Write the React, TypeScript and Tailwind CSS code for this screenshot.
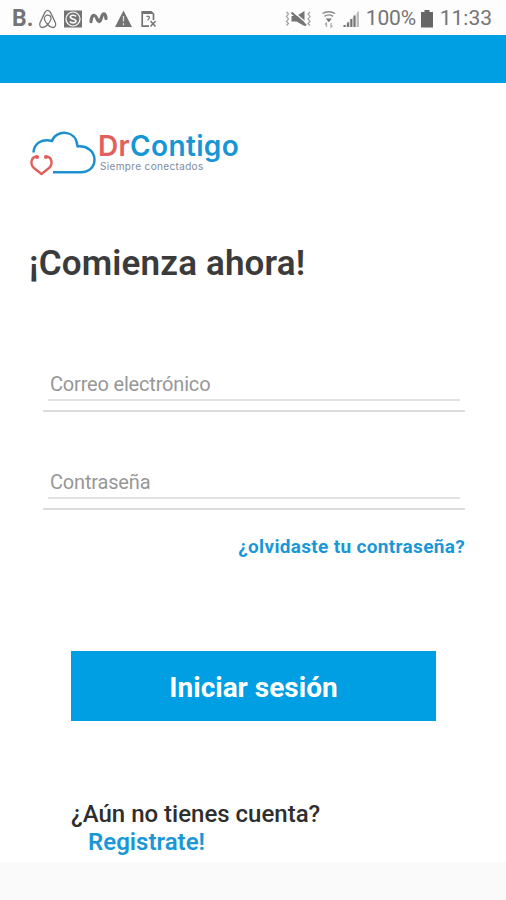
import React, { useState } from "react";

interface FieldProps {
  id: string;
  type: string;
  label: string;
  value: string;
  onChange: (value: string) => void;
}

function Field({ id, type, label, value, onChange }: FieldProps) {
  return (
    <div className="h-[47px] border-b-2 border-[#dcdcdc] px-[5px]">
      <input
        id={id}
        type={type}
        value={value}
        placeholder={label}
        aria-label={label}
        onChange={(e) => onChange(e.target.value)}
        className="block h-[36px] w-full border-b-2 border-[#e2e2e2] px-[2px] pt-[3px] text-[20px] tracking-[-0.18px] text-[#444] placeholder:text-[#979797] placeholder:opacity-100 focus:outline-none"
      />
    </div>
  );
}

function StatusBar() {
  return (
    <div className="flex h-[35px] items-center justify-between bg-[#fdfdfd] pl-[12px] pr-[14px] pt-[2px] text-[#747474]">
      {/* Notifications */}
      <div className="flex items-center">
        <span className="w-[26px] text-[23px] font-bold leading-none">B.</span>
        <svg width="120" height="20" viewBox="38 8 120 20" fill="none" stroke="currentColor">
          {/* Airbnb */}
          <path
            d="M47.700 9.300c-1.500 0-2.200 1-3 2.600l-4.500 9.300c-1.500 3 .2 5.300 2.500 5.300 2 0 3.800-1.500 5-3 1.200 1.500 3 3 5 3 2.300 0 4-2.300 2.500-5.300l-4.500-9.300c-.8-1.600-1.500-2.600-3-2.600z"
            strokeWidth="1.300"
          />
          <path
            d="M47.700 23.500c-2-2.300-3.300-4.300-3.300-6 0-2 1.400-3.300 3.300-3.300s3.300 1.300 3.300 3.300c0 1.700-1.300 3.700-3.300 6z"
            strokeWidth="1.200"
          />
          {/* Square S */}
          <rect x="64" y="9.500" width="18" height="17" fill="currentColor" stroke="none" />
          <circle cx="73" cy="18" r="7" stroke="#fdfdfd" strokeWidth="1.200" />
          <path d="M76 15.500c-1-1.700-5.500-1.800-5.700.5-.2 2.300 5.600 1.500 5.600 4 0 2.400-4.700 2.300-6 .5" stroke="#fdfdfd" strokeWidth="1.600" />
          {/* Movistar */}
          <path d="M91 20.500c.3-4 1.500-6.500 3.500-6 2.500.5 2.500 6 4.800 6 2 0 2-7.500 4.500-7.500 1.700 0 2 2.500 2.200 4.500" strokeWidth="3.300" strokeLinecap="round" />
          {/* Warning */}
          <path d="M123.500 9.500l8.500 16.500h-17z" fill="currentColor" stroke="none" />
          <path d="M123.500 15v5.500M123.500 22.300v2" stroke="#fdfdfd" strokeWidth="1.300" opacity=".8" />
          {/* Document */}
          <path d="M149 25.200h-6.800V10.800h9l2.300 2.200v6" strokeWidth="1.700" />
          <path d="M143 12h9.500" strokeWidth="2" />
          <path d="M146.800 16c.5-1.200 2.700-1 2.700.4 0 1.200-1.600 1.400-1.600 3" strokeWidth="1.200" />
          <path d="M150.500 20l5 5.500M155.500 20l-5 5.500" strokeWidth="1.500" />
        </svg>
      </div>

      {/* System */}
      <div className="flex items-center">
        <svg width="80" height="20" viewBox="284 8 80 20" fill="none" stroke="currentColor">
          {/* Vibrate, muted */}
          <path d="M285.500 11l2 2-2 2.500 2 2.500-2 2.500 2 2-2 2M309 11l-2 2 2 2.500-2 2.500 2 2.500-2 2 2 2" strokeWidth="1.200" opacity=".7" />
          <path d="M290.500 15h5l8-5v15l-8-4.500h-5z" fill="currentColor" stroke="none" />
          <path d="M291 9.500l14.500 12.500" stroke="#fdfdfd" strokeWidth="1.500" />
          <path d="M290.500 11.500l14.500 13" strokeWidth="2.200" />
          {/* Wifi */}
          <path d="M321.500 12.500c3.500-2.500 9-2.500 12.500 0M323.500 15.300c2.300-1.800 6-1.800 8.500 0" strokeWidth="1.500" opacity=".85" />
          <path d="M324.800 17.500h6l-3 3.800z" fill="currentColor" stroke="none" />
          <path d="M325.500 26v-4l-1.500 1.500M330 22v4l1.500-1.500" strokeWidth="1.200" opacity=".6" />
          {/* Signal */}
          <path d="M342 26l16-16v16z" fill="currentColor" stroke="none" opacity=".22" />
          <path d="M343.500 24v2M347 21.500V26M350.300 18v8M353.500 14.500V26" strokeWidth="2" />
          <path d="M357 10.500V26" strokeWidth="2" opacity=".3" />
        </svg>
        <span className="ml-[1px] w-[55px] text-[21px] leading-none tracking-[-0.1px]">100%</span>
        <svg width="12" height="18" viewBox="0 0 12 18" fill="#666">
          <path d="M3.500 0h5v2H12v15.500H0V2h3.500z" />
        </svg>
        <span className="ml-[7px] text-[21px] leading-none">11:33</span>
      </div>
    </div>
  );
}

function Logo() {
  return (
    <div className="flex h-[46px] items-start">
      <svg width="68" height="46" viewBox="29 130 68 46" fill="none">
        <path
          d="M33.500 152.500c.5-9 8.500-14.500 18.500-11.500 3.500-11 24-12.500 25.500 5.500 9-1 17 4.500 17 13 0 8-6 12.700-13.500 12.700H53"
          stroke="#1e90cd"
          strokeWidth="2.500"
          strokeLinejoin="round"
        />
        <path
          d="M37 156.500c-6.500.5-7 8-3 11.500l7.500 6 7.500-6c4-3.500 3.500-11-3-11.500"
          stroke="#e2605c"
          strokeWidth="2.400"
          strokeLinejoin="round"
        />
        <circle cx="37" cy="157" r="2.100" fill="#e2605c" />
        <circle cx="46" cy="157" r="2.100" fill="#e2605c" />
      </svg>
      <div className="pl-[1px]">
        <p className="whitespace-nowrap pt-px font-['Inter'] text-[28px] font-semibold leading-[31px] tracking-[0.350px] text-[#1796d6]">
          <span className="text-[#e2605c]">Dr</span>Contigo
        </p>
        <p className="-mt-px whitespace-nowrap pl-[2px] font-['Inter'] text-[10px] leading-[10px] tracking-[0.350px] text-[#7d8ba0]">
          Siempre conectados
        </p>
      </div>
    </div>
  );
}

export default function App() {
  const [email, setEmail] = useState("");
  const [password, setPassword] = useState("");

  return (
    <div className="flex h-[900px] w-[506px] flex-col overflow-hidden bg-white font-['Roboto',sans-serif]">
      <StatusBar />
      <div className="h-[48px] shrink-0 bg-[#009fe3]" />

      <main className="flex-1 pt-[47px]">
        <div className="px-[29px]">
          <Logo />
          <h1 className="mt-[68px] text-[35px] font-semibold leading-[40px] tracking-[0.160px] text-[#3b3b3b]">
            ¡Comienza ahora!
          </h1>
        </div>

        <form className="pl-[43px] pr-[41px] pt-[81px]" onSubmit={(e) => e.preventDefault()}>
          <Field id="email" type="email" label="Correo electrónico" value={email} onChange={setEmail} />
          <div className="h-[51px]" />
          <Field id="password" type="password" label="Contraseña" value={password} onChange={setPassword} />
          <div className="mt-[25px] flex justify-end">
            <a href="#" className="whitespace-nowrap text-[19px] font-bold leading-[24px] tracking-[0.330px] text-[#1a97d8]">
              ¿olvidaste tu contraseña?
            </a>
          </div>
          <button
            type="submit"
            className="ml-[28px] mt-[92px] block h-[70px] w-[365px] bg-[#009fe3] pt-[3px] text-[28px] font-bold text-white"
          >
            Iniciar sesión
          </button>
        </form>

        <div className="pl-[71px] pt-[79px] text-[24px] font-medium leading-[28px]">
          <p className="text-[#2e2e2e]">¿Aún no tienes cuenta?</p>
          <a href="#" className="ml-[17px] block font-semibold text-[#1a97d8]">
            Registrate!
          </a>
        </div>
      </main>

      <div className="h-[38px] shrink-0 bg-[#fafafa]" />
    </div>
  );
}
